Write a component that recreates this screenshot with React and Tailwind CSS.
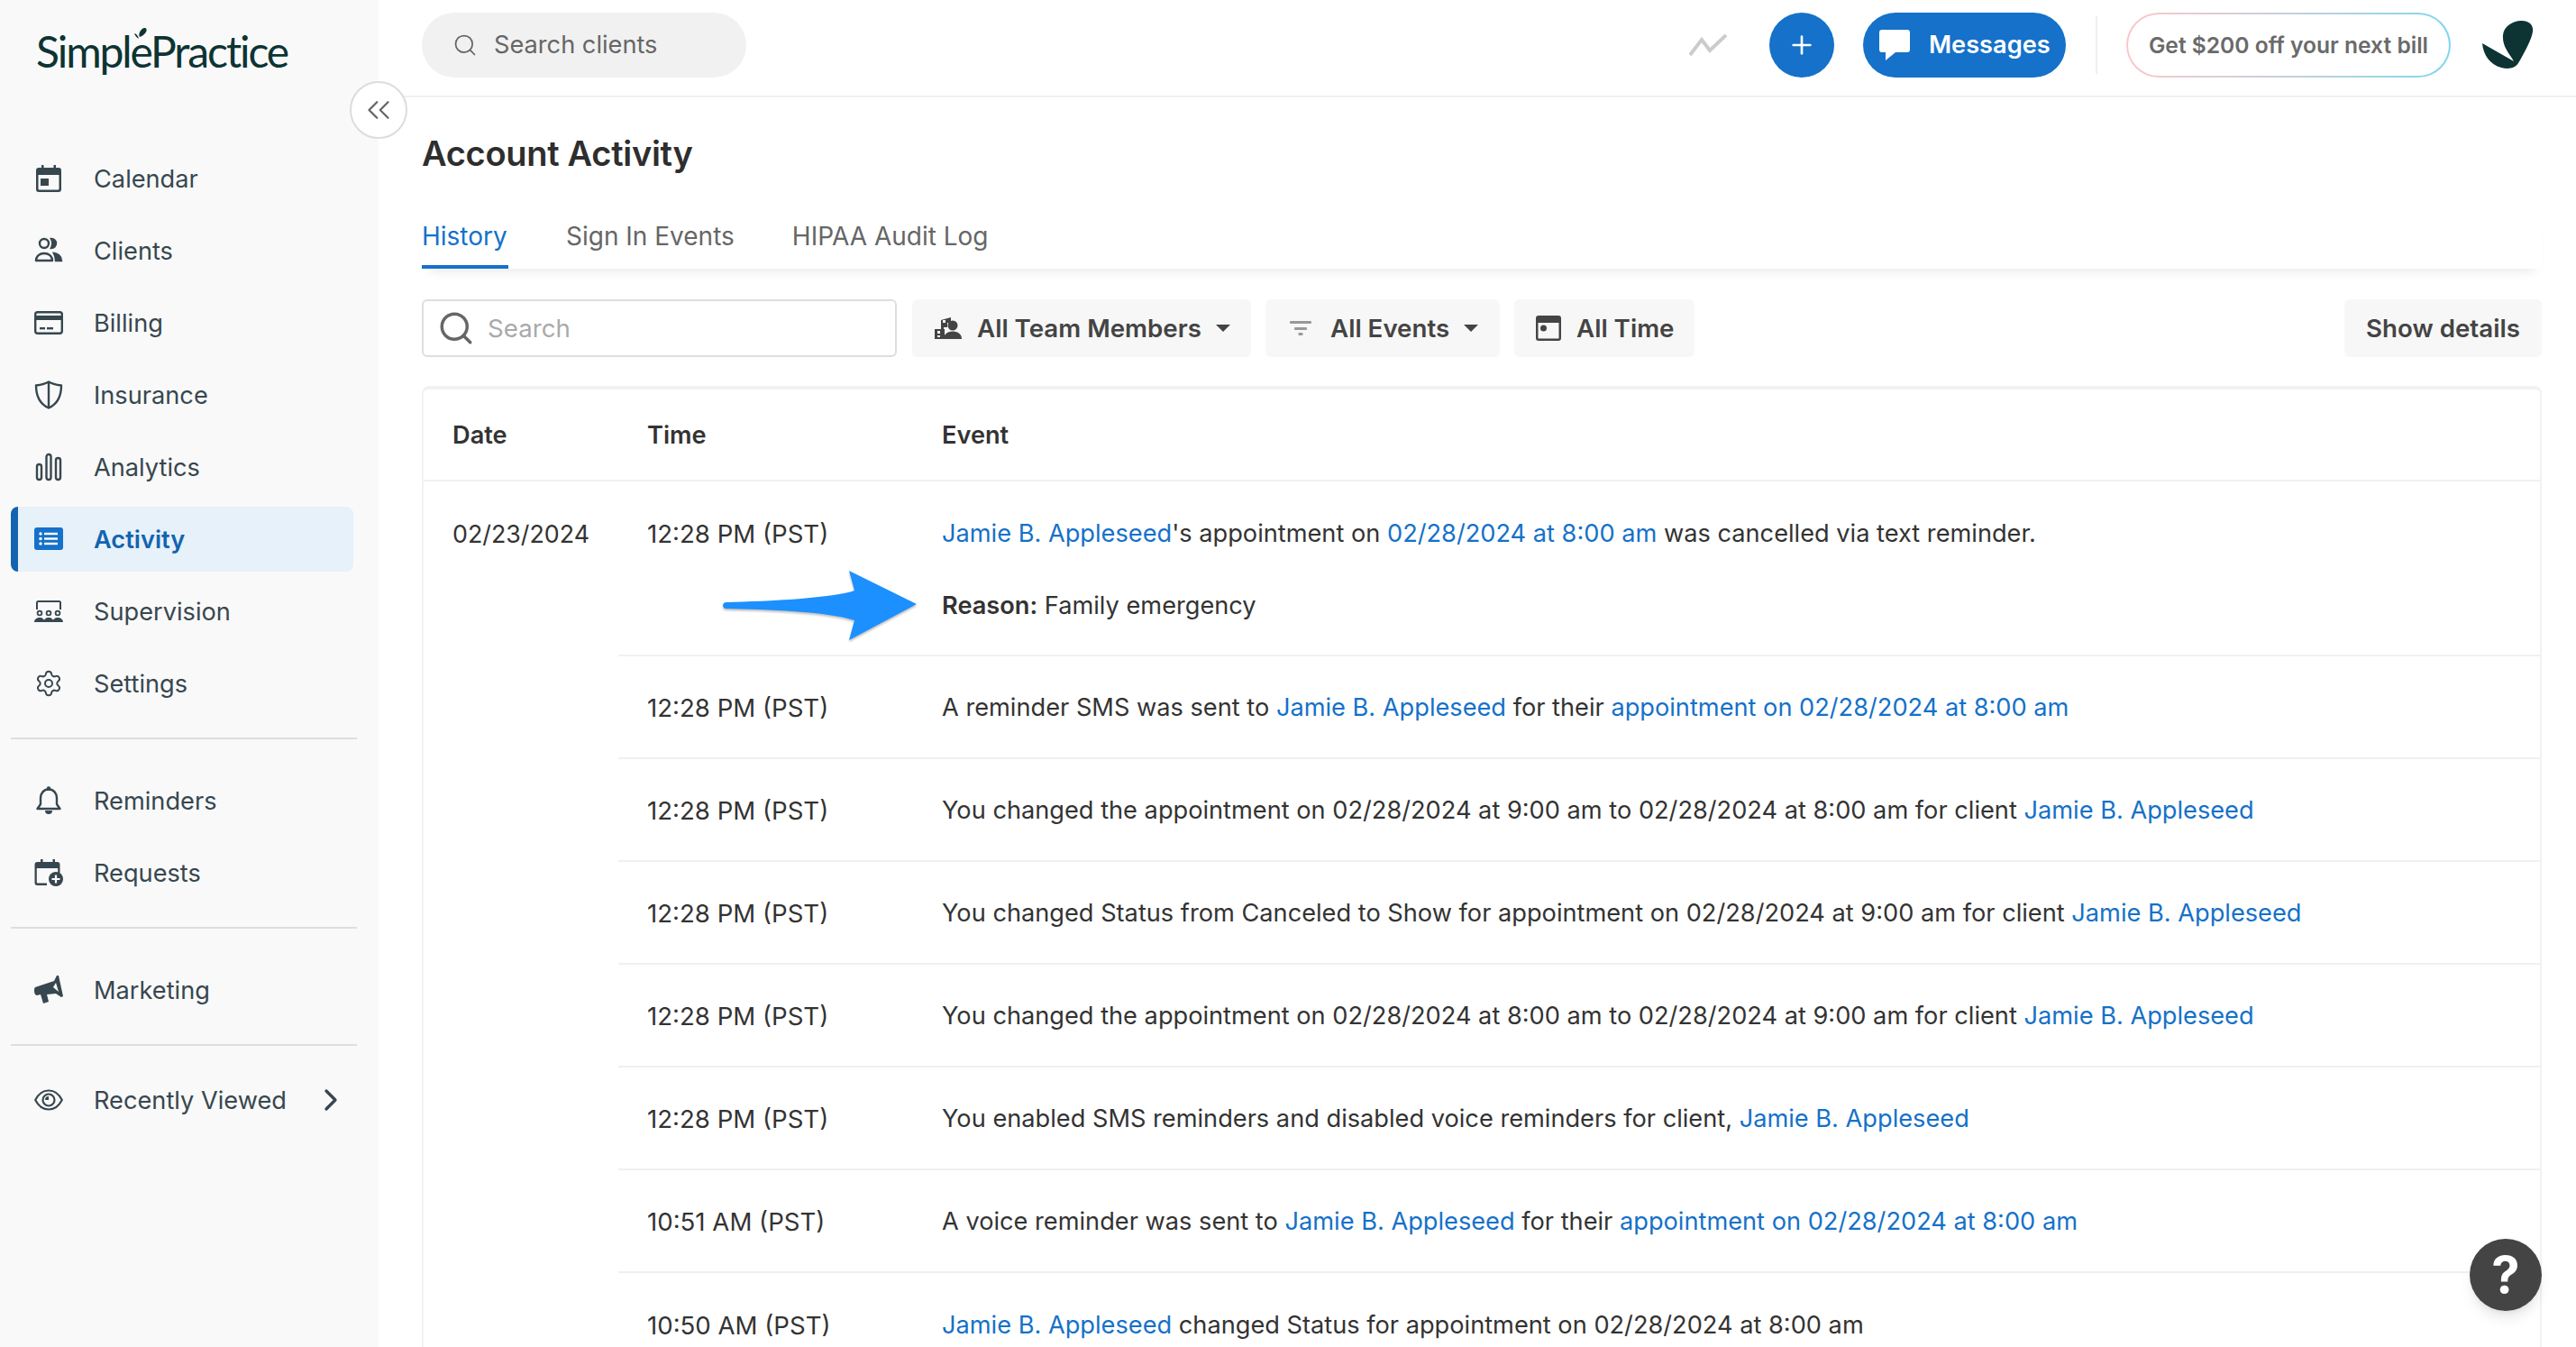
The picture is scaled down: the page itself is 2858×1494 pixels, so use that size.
import { ChevronsLeft, ChevronRight, Search, Plus, Settings } from 'lucide-react'

const rows = [
  {
    time: '12:28 PM (PST)',
    parts: [['l', 'Jamie B. Appleseed'], ['t', "'s appointment on "], ['l', '02/28/2024 at 8:00 am'], ['t', ' was cancelled via text reminder.']],
  },
  {
    time: '12:28 PM (PST)',
    parts: [['t', 'A reminder SMS was sent to '], ['l', 'Jamie B. Appleseed'], ['t', ' for their '], ['l', 'appointment on 02/28/2024 at 8:00 am']],
  },
  {
    time: '12:28 PM (PST)',
    parts: [['t', 'You changed the appointment on 02/28/2024 at 9:00 am to 02/28/2024 at 8:00 am for client '], ['l', 'Jamie B. Appleseed']],
  },
  {
    time: '12:28 PM (PST)',
    parts: [['t', 'You changed Status from Canceled to Show for appointment on 02/28/2024 at 9:00 am for client '], ['l', 'Jamie B. Appleseed']],
  },
  {
    time: '12:28 PM (PST)',
    parts: [['t', 'You changed the appointment on 02/28/2024 at 8:00 am to 02/28/2024 at 9:00 am for client '], ['l', 'Jamie B. Appleseed']],
  },
  {
    time: '12:28 PM (PST)',
    parts: [['t', 'You enabled SMS reminders and disabled voice reminders for client, '], ['l', 'Jamie B. Appleseed']],
  },
  {
    time: '10:51 AM (PST)',
    parts: [['t', 'A voice reminder was sent to '], ['l', 'Jamie B. Appleseed'], ['t', ' for their '], ['l', 'appointment on 02/28/2024 at 8:00 am']],
  },
  {
    time: '10:50 AM (PST)',
    parts: [['l', 'Jamie B. Appleseed'], ['t', ' changed Status for appointment on 02/28/2024 at 8:00 am']],
  },
]

function CalendarIcon() {
  return (
    <svg viewBox="0 0 32 32" className="w-8 h-8" fill="#37474f">
      <path d="M8 1h2.500v3h11V1H24v3h3a3 3 0 0 1 3 3v21a3 3 0 0 1-3 3H5a3 3 0 0 1-3-3V7a3 3 0 0 1 3-3h3zM4.500 12v15.500a1 1 0 0 0 1 1h21a1 1 0 0 0 1-1V12z" />
      <rect x="7" y="16" width="9" height="8" />
    </svg>
  )
}

function ClientsIcon() {
  return (
    <svg viewBox="0 0 32 32" className="w-8 h-8" fill="none" stroke="#37474f" strokeWidth="2.400">
      <circle cx="11" cy="8" r="5" />
      <path d="M2 27c0-5 4-8 9-8s9 3 9 8z" strokeLinejoin="round" />
      <path d="M19 3a5 5 0 0 1 0 10c1.500-3 1.500-7 0-10z" fill="#37474f" />
      <path d="M22 19c4 .5 8 3 8 8h-6c0-3-1-6-2-8z" fill="#37474f" />
    </svg>
  )
}

function BillingIcon() {
  return (
    <svg viewBox="0 0 32 26" className="w-8 h-[26px]" fill="none">
      <rect x="1.200" y="1.200" width="29.600" height="23.600" rx="2.500" stroke="#37474f" strokeWidth="2.400" />
      <rect x="1" y="5" width="30" height="5" fill="#37474f" />
      <rect x="6" y="18" width="6" height="2.400" fill="#37474f" />
      <rect x="14" y="18" width="7" height="2.400" fill="#37474f" />
    </svg>
  )
}

function ShieldIcon() {
  return (
    <svg viewBox="0 0 32 32" className="w-8 h-8" fill="none" stroke="#37474f" strokeWidth="2.400" strokeLinejoin="round">
      <path d="M16 1.500C12 4 6 5 2 5.500 2 17 6 26 16 30.500 26 26 30 17 30 5.500 26 5 20 4 16 1.500z" />
      <path d="M16 1.500v29" />
    </svg>
  )
}

function AnalyticsIcon() {
  return (
    <svg viewBox="0 0 32 32" className="w-8 h-8" fill="none" stroke="#37474f" strokeWidth="2.400">
      <rect x="3" y="13" width="5" height="17" rx="2.500" />
      <rect x="13.500" y="2" width="5" height="28" rx="2.500" />
      <rect x="24" y="6" width="5" height="24" rx="2.500" />
    </svg>
  )
}

function ActivityIcon() {
  return (
    <svg viewBox="0 0 32 26" className="w-8 h-[26px]">
      <rect width="32" height="25" rx="3" fill="#1571c9" />
      <g fill="#fff">
        <circle cx="7" cy="7" r="1.700" />
        <circle cx="7" cy="12.500" r="1.700" />
        <circle cx="7" cy="18" r="1.700" />
        <rect x="11" y="5.800" width="15" height="2.400" />
        <rect x="11" y="11.300" width="15" height="2.400" />
        <rect x="11" y="16.800" width="15" height="2.400" />
      </g>
    </svg>
  )
}

function SupervisionIcon() {
  return (
    <svg viewBox="0 0 32 26" className="w-8 h-[26px]" fill="#37474f">
      <path d="M2 11V3.500A2.500 2.500 0 0 1 4.500 1h23A2.500 2.500 0 0 1 30 3.500V11h-2V3H4v8z" />
      <circle cx="6" cy="15" r="2.400" fill="none" stroke="#37474f" strokeWidth="1.800" />
      <circle cx="16" cy="15" r="2.400" fill="none" stroke="#37474f" strokeWidth="1.800" />
      <circle cx="26" cy="15" r="2.400" fill="none" stroke="#37474f" strokeWidth="1.800" />
      <path d="M0 25c0-3 3-5 6-5s5.500 2 5.500 5zM10.500 25c0-3 2.500-5 5.500-5s5.500 2 5.500 5zM20.500 25c0-3 2.500-5 5.500-5s6 2 6 5z" />
    </svg>
  )
}

function BellIcon() {
  return (
    <svg viewBox="0 0 28 32" className="w-7 h-8" fill="#37474f">
      <circle cx="14" cy="2.500" r="2.300" />
      <path d="M14 3.500C8.500 3.500 5 8 5 13v7l-3.500 5h25L23 20v-7c0-5-3.500-9.500-9-9.500z" fill="none" stroke="#37474f" strokeWidth="2.400" strokeLinejoin="round" />
      <path d="M10 27h8a4 4 0 0 1-8 0z" />
    </svg>
  )
}

function RequestsIcon() {
  return (
    <svg viewBox="0 0 32 32" className="w-8 h-8">
      <path d="M7 1h2.500v3h11V1H23v3h2.500A3 3 0 0 1 28.500 7v10h-2.300v-6H2.800v15.500a1 1 0 0 0 1 1H14v2.500H3.500a3 3 0 0 1-3-3V7a3 3 0 0 1 3-3H7z" fill="#37474f" />
      <circle cx="24" cy="23" r="8" fill="#37474f" />
      <path d="M24 18.500v9M19.500 23h9" stroke="#fff" strokeWidth="2.200" />
    </svg>
  )
}

function MegaphoneIcon() {
  return (
    <svg viewBox="0 0 32 32" className="w-8 h-8" fill="#37474f">
      <path
        fillRule="evenodd"
        d="M1 13L22 6 25 0l2 0 5 23-2 1-6-4-10 1 2 8-6 2-3-10-4 1c-2 0-3-3-3-5 0-2 0-3 1-4zM24 8l-3 5 6 5z"
      />
    </svg>
  )
}

function EyeIcon() {
  return (
    <svg viewBox="0 0 32 24" className="w-8 h-6" fill="none" stroke="#37474f" strokeWidth="2.200">
      <path d="M1.200 12C4.500 5.500 10 1.500 16 1.500S27.500 5.500 30.800 12C27.500 18.500 22 22.500 16 22.500S4.500 18.500 1.200 12z" strokeLinejoin="round" />
      <circle cx="16" cy="12" r="6.500" />
      <path d="M12 12a4 4 0 0 1 4-4v4z" fill="#37474f" stroke="none" />
    </svg>
  )
}

function TeamIcon() {
  return (
    <svg viewBox="0 0 30 24" className="w-[30px] h-6" fill="#444">
      <path d="M7 3l11-3v6h-4v5H10v2H0v11h11V13H7z" />
      <g fill="#f7f7f7">
        <rect x="9" y="3" width="3" height="3" />
        <rect x="3" y="15" width="3" height="3" />
        <rect x="3" y="20" width="3" height="2" />
      </g>
      <circle cx="20" cy="9" r="5.500" />
      <path d="M10 24c0-5 4-8.500 10-8.500S30 19 30 24z" />
    </svg>
  )
}

function SidebarLink({ icon, label, active, after }) {
  if (active) {
    return (
      <div className="h-[72px] mx-3 w-[380px] flex items-center rounded-lg overflow-hidden bg-[#e7f1fa] border-l-8 border-[#1264b0] text-[#1264b0] font-semibold">
        <span className="w-8 flex justify-center ml-[18px] mr-[34px]">{icon}</span>
        <span className="pt-[2px]">{label}</span>
      </div>
    )
  }
  return (
    <div className="h-[72px] flex items-center pl-[38px] text-[#37474f]">
      <span className="w-8 flex justify-center mr-[34px]">{icon}</span>
      <span className="pt-[2px]">{label}</span>
      {after}
    </div>
  )
}

function Sidebar() {
  return (
    <aside className="w-[420px] h-full shrink-0 bg-[#f9f9f9] flex flex-col">
      <div className="h-[162px] shrink-0 pl-[40px] pt-[27px] relative">
        <span className="font-['Lato',sans-serif] text-[48px] leading-[60px] tracking-[-2.100px] text-[#0d3433]">SimplePractice</span>
        <svg viewBox="0 0 20 20" className="absolute left-[148px] top-[28px] w-[20px] h-[20px]" fill="#0d3433">
          <path d="M7 13c-2-3 1-9 5-10 2-.5 3 1 2.500 3C14 9 10 12 7 13z" />
          <path d="M6 15C4 14 2 12 1 9c2 .5 4 2 5 6z" />
        </svg>
      </div>
      <div className="flex flex-col gap-2">
        <SidebarLink icon={<CalendarIcon />} label="Calendar" />
        <SidebarLink icon={<ClientsIcon />} label="Clients" />
        <SidebarLink icon={<BillingIcon />} label="Billing" />
        <SidebarLink icon={<ShieldIcon />} label="Insurance" />
        <SidebarLink icon={<AnalyticsIcon />} label="Analytics" />
        <SidebarLink icon={<ActivityIcon />} label="Activity" active />
        <SidebarLink icon={<SupervisionIcon />} label="Supervision" />
        <SidebarLink icon={<Settings size={38} color="#37474f" strokeWidth={1.500} />} label="Settings" />
      </div>
      <div className="h-[2px] shrink-0 bg-[#dedede] mx-3 w-[384px] mt-6 mb-8" />
      <div className="flex flex-col gap-2">
        <SidebarLink icon={<BellIcon />} label="Reminders" />
        <SidebarLink icon={<RequestsIcon />} label="Requests" />
      </div>
      <div className="h-[2px] shrink-0 bg-[#dedede] mx-3 w-[384px] mt-6 mb-8" />
      <SidebarLink icon={<MegaphoneIcon />} label="Marketing" />
      <div className="h-[2px] shrink-0 bg-[#dedede] mx-3 w-[384px] mt-6 mb-6" />
      <SidebarLink
        icon={<EyeIcon />}
        label="Recently Viewed"
        after={<ChevronRight size={40} color="#37474f" strokeWidth={2} className="ml-[29px]" />}
      />
    </aside>
  )
}

function TopBar() {
  return (
    <header className="h-[108px] shrink-0 border-b-2 border-[#f0f0f0] flex items-center pl-[48px] pr-[47px] pb-[6px]">
      <div className="w-[360px] h-[72px] rounded-full bg-[#f1f1f1] flex items-center pl-[34px] text-[#666]">
        <Search size={28} color="#666" strokeWidth={1.500} className="mr-[18px]" />
        Search clients
      </div>
      <svg viewBox="0 0 42 26" className="w-[42px] h-[26px] ml-auto mr-[47px]" fill="none" stroke="#ccc" strokeWidth="4">
        <path d="M1 24L14 7l9 12L41 2" />
      </svg>
      <div className="w-[72px] h-[72px] rounded-full bg-[#1571c9] flex items-center justify-center mr-[32px]">
        <Plus size={32} color="#fff" strokeWidth={2} />
      </div>
      <div className="w-[225px] h-[72px] rounded-full bg-[#1571c9] flex items-center pl-[18px] text-white font-semibold mr-[33px]">
        <svg viewBox="0 0 34 34" className="w-[34px] h-[34px] mr-[21px]" fill="#fff">
          <path d="M3 0h28a3 3 0 0 1 3 3v19a3 3 0 0 1-3 3H18l-11 9v-9H3a3 3 0 0 1-3-3V3a3 3 0 0 1 3-3z" />
        </svg>
        Messages
      </div>
      <div className="w-[2px] h-[64px] bg-[#efefef] mr-[32px]" />
      <div className="w-[360px] h-[72px] rounded-full p-[2px] bg-gradient-to-r from-[#fbc7c9] to-[#7dd6ef] mr-[34px]">
        <div className="w-full h-full rounded-full bg-white flex items-center justify-center text-[24.600px] font-semibold text-[#6a6a6a]">
          Get $200 off your next bill
        </div>
      </div>
      <svg viewBox="0 0 58 54" className="w-[58px] h-[54px]" fill="#0d3433">
        <path d="M1 25L36 45C30 35 23 28 24 16C25 6 35 0 45 0C53 0 58 5 57 12C56 20 48 35 41 47C37 53 30 54 22 52C10 49 2 38 1 25Z" />
      </svg>
    </header>
  )
}

function Caret() {
  return <span className="border-x-[8px] border-x-transparent border-t-[8px] border-t-[#444]" />
}

function Filters() {
  return (
    <div className="flex items-center mt-[34px] h-[64px] font-semibold text-[27.700px] text-[#444]">
      <div className="w-[527px] h-full border-2 border-[#dedede] rounded-md flex items-center pl-[15px] text-[#aaa] font-normal">
        <Search size={42} color="#666" strokeWidth={2} className="mr-[14px]" />
        Search
      </div>
      <div className="w-[376px] h-full ml-[17px] bg-[#f7f7f7] rounded-md flex items-center pl-[25px]">
        <TeamIcon />
        <span className="ml-[17px] mr-[16px]">All Team Members</span>
        <Caret />
      </div>
      <div className="w-[260px] h-full ml-[16px] bg-[#f7f7f7] rounded-md flex items-center pl-[27px]">
        <svg viewBox="0 0 24 16" className="w-6 h-4" fill="#999">
          <rect width="24" height="3" rx="1" />
          <rect x="5" y="7" width="14" height="3" rx="1" />
          <rect x="9.500" y="13" width="5" height="3" rx="1" />
        </svg>
        <span className="ml-[21px] mr-[16px]">All Events</span>
        <Caret />
      </div>
      <div className="w-[200px] h-full ml-[16px] bg-[#f7f7f7] rounded-md flex items-center pl-[24px]">
        <svg viewBox="0 0 28 28" className="w-7 h-7" fill="#444">
          <path d="M3 0h22a3 3 0 0 1 3 3v22a3 3 0 0 1-3 3H3a3 3 0 0 1-3-3V3a3 3 0 0 1 3-3zM2.500 8v17a.5.5 0 0 0 .5.5h22a.5.5 0 0 0 .5-.5V8z" />
          <circle cx="8.500" cy="14" r="3.500" />
        </svg>
        <span className="ml-[17px]">All Time</span>
      </div>
      <div className="w-[219px] h-full ml-auto bg-[#f7f7f7] rounded-md flex items-center justify-center">
        Show details
      </div>
    </div>
  )
}

function Arrow() {
  return (
    <svg viewBox="0 0 216 78" className="absolute left-[-243px] top-[-21px] w-[216px] h-[78px] drop-shadow-[0_2px_1px_rgba(0,0,0,0.25)]" fill="#1c90ff">
      <path d="M3 35C50 34 125 30 146 22L140 0L215 37L140 77L146 55C115 45 50 43 3 42C-1 41 -1 36 3 35Z" />
    </svg>
  )
}

function ActivityTable() {
  return (
    <div className="mt-[32px] flex-1 min-h-0 border-2 border-t-4 border-b-0 border-[#f2f2f2] rounded-t-lg overflow-hidden text-[#333]">
      <div className="h-[102px] border-b-2 border-[#f2f2f2] flex items-center font-semibold pt-[2px]">
        <div className="w-[216px] pl-[32px]">Date</div>
        <div className="w-[359px] pl-[32px]">Time</div>
        <div>Event</div>
      </div>
      <div className="flex">
        <div className="w-[216px] shrink-0 pl-[32px] pt-[40px] text-[26.800px]">02/23/2024</div>
        <div className="flex-1 min-w-0">
          {rows.map((row, i) => (
            <div key={i} className={`flex border-[#f0f0f0] ${i < rows.length - 1 ? 'border-b-2' : ''} ${i === 0 ? 'h-[194px] pt-[40px]' : 'h-[114px] items-center pt-[2px]'}`}>
              <div className="w-[359px] shrink-0 pl-[32px] text-[27.600px]">{row.time}</div>
              <div>
                <div>
                  {row.parts.map(([kind, text], j) =>
                    kind === 'l' ? <a key={j} className="text-[#1571c9]">{text}</a> : <span key={j}>{text}</span>
                  )}
                </div>
                {i === 0 && (
                  <div className="relative mt-[44px]">
                    <Arrow />
                    <b className="font-semibold">Reason:</b> Family emergency
                  </div>
                )}
              </div>
            </div>
          ))}
        </div>
      </div>
    </div>
  )
}

export default function App() {
  return (
    <div className="w-[2858px] h-[1494px] overflow-hidden flex relative bg-white font-['Inter',sans-serif] text-[27.200px] leading-[36px]">
      <Sidebar />
      <main className="flex-1 min-w-0 flex flex-col">
        <TopBar />
        <div className="flex-1 min-h-0 flex flex-col pl-[48px] pr-[38px]">
          <h1 className="text-[38px] leading-[48px] tracking-[-0.300px] font-semibold text-[#2e2e2e] mt-[38px]">Account Activity</h1>
          <div className="flex mt-[46px] h-[58px] pt-[4px] gap-[64px] text-[28px] text-[#666] shadow-[0_10px_12px_-8px_rgba(0,0,0,0.1)]">
            <div className="w-[96px] h-[54px] border-b-4 border-[#1571c9] text-[#1571c9]">History</div>
            <div>Sign In Events</div>
            <div>HIPAA Audit Log</div>
          </div>
          <Filters />
          <ActivityTable />
        </div>
      </main>
      <div className="absolute left-[388px] top-[90px] w-16 h-16 rounded-full bg-white border-2 border-[#dcdcdc] flex items-center justify-center">
        <ChevronsLeft size={42} color="#666" strokeWidth={1.300} />
      </div>
      <div className="absolute left-[2740px] top-[1374px] w-20 h-20 rounded-full bg-[#444] shadow-lg flex items-center justify-center text-white font-bold text-[56px] leading-none">?</div>
    </div>
  )
}
